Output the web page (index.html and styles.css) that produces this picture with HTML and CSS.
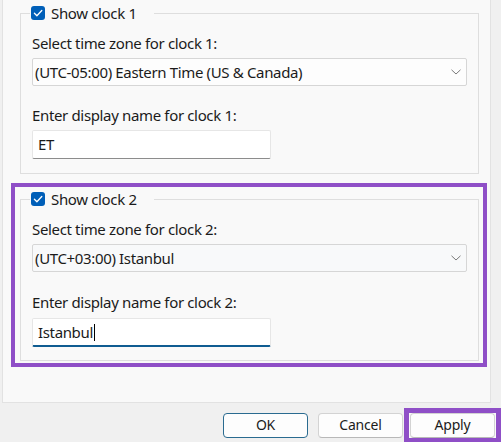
FILE: index.html
```html
<!DOCTYPE html>
<html lang="en">
<head>
<meta charset="utf-8">
<title>Additional Clocks</title>
<link rel="stylesheet" href="styles.css">
</head>
<body>
  <div class="panel">
    <fieldset class="group">
      <legend class="legend">
        <span class="check"><svg viewBox="0 0 14 14" width="14" height="14"><path d="M3.4 7.3 L5.9 9.8 L10.8 4.5" fill="none" stroke="#fff" stroke-width="1.3" stroke-linecap="round" stroke-linejoin="round"/></svg></span>
        <span class="legend-text">Show clock 1</span>
      </legend>
      <div class="field-label">Select time zone for clock 1:</div>
      <div class="select">
        <span class="select-text">(UTC-05:00) Eastern Time (US &amp; Canada)</span>
        <svg class="chev" viewBox="0 0 10 6" width="10" height="6"><path d="M0.5 0.8 L5 5 L9.5 0.8" fill="none" stroke="#7a7a7a" stroke-width="1"/></svg>
      </div>
      <div class="field-label second">Enter display name for clock 1:</div>
      <div class="textbox">ET</div>
    </fieldset>

    <div class="highlight">
      <fieldset class="group">
        <legend class="legend">
          <span class="check"><svg viewBox="0 0 14 14" width="14" height="14"><path d="M3.4 7.3 L5.9 9.8 L10.8 4.5" fill="none" stroke="#fff" stroke-width="1.3" stroke-linecap="round" stroke-linejoin="round"/></svg></span>
          <span class="legend-text">Show clock 2</span>
        </legend>
        <div class="field-label">Select time zone for clock 2:</div>
        <div class="select hover">
          <span class="select-text">(UTC+03:00) Istanbul</span>
          <svg class="chev" viewBox="0 0 10 6" width="10" height="6"><path d="M0.5 0.8 L5 5 L9.5 0.8" fill="none" stroke="#7a7a7a" stroke-width="1"/></svg>
        </div>
        <div class="field-label second">Enter display name for clock 2:</div>
        <div class="textbox focused">Istanbul<span class="caret"></span></div>
      </fieldset>
    </div>
  </div>

  <div class="footer">
    <button class="btn default">OK</button>
    <button class="btn cancel">Cancel</button>
    <div class="highlight-btn"><button class="btn">Apply</button></div>
  </div>
</body>
</html>
```

FILE: styles.css
```css
html, body {
  margin: 0;
  padding: 0;
}
body {
  background: #f0f0f0;
  font-family: "Noto Sans", "Open Sans", sans-serif;
  font-size: 15px;
  letter-spacing: -0.35px;
  color: #1b1b1b;
  width: 501px;
  height: 442px;
  overflow: hidden;
}
.panel {
  margin-left: 2px;
  width: 489px;
  height: 403px;
  box-sizing: border-box;
  background: #f9f9f9;
  border: 1px solid #e2e2e2;
  border-top: none;
  padding: 3px 0 0 8px;
  display: flex;
  flex-direction: column;
}
.group {
  margin: 0 0 0 9px;
  width: 459px;
  box-sizing: border-box;
  border: 1px solid #dedede;
  padding: 10px 10px 14px 11px;
  min-inline-size: 0;
  display: flex;
  flex-direction: column;
  align-items: flex-start;
}
.legend {
  margin-left: -2px;
  padding: 0 17px 0 1px;
  height: 20px;
  display: flex;
  align-items: center;
  gap: 6px;
  line-height: 20px;
}
.check {
  width: 14px;
  height: 14px;
  border-radius: 3px;
  background: #005fb8;
  display: flex;
}
.field-label {
  line-height: 20px;
  height: 20px;
  white-space: nowrap;
}
.field-label.second {
  margin-top: 19px;
}
.select {
  margin-top: 5px;
  width: 435px;
  height: 28px;
  box-sizing: border-box;
  border: 1px solid #d6d6d6;
  border-radius: 2px;
  background: #fdfdfd;
  display: flex;
  align-items: center;
  justify-content: space-between;
  padding: 0 5px 1px 2px;
  white-space: nowrap;
}
.select.hover {
  background: #f8f9fa;
}
.chev {
  margin-top: 1px;
}
.textbox {
  margin-top: 5px;
  width: 239px;
  height: 29px;
  box-sizing: border-box;
  background: #ffffff;
  border: 1px solid #e6e6e6;
  border-bottom: 1px solid #8c8c8c;
  border-radius: 2px;
  padding: 0 5px 1px 5px;
  display: flex;
  align-items: center;
}
.textbox.focused {
  border-bottom: 2px solid #0f5c91;
  padding-bottom: 0;
}
.caret {
  width: 1px;
  height: 17px;
  background: #000;
  margin-left: 1px;
}
.highlight {
  margin-top: 9px;
  width: 476px;
  box-sizing: border-box;
  border: 4px solid #8f4fc7;
  padding: 2px 4px 2px 5px;
}
.highlight .group {
  margin-left: 0;
  padding-bottom: 13px;
}
.highlight .field-label.second {
  margin-top: 20px;
}
.highlight .textbox {
  margin-top: 6px;
}
.footer {
  display: flex;
  justify-content: flex-end;
  align-items: flex-start;
  padding-top: 5px;
}
.btn {
  font-family: "Noto Sans", "Open Sans", sans-serif;
  font-size: 14px;
  letter-spacing: -0.2px;
  color: #1b1b1b;
  width: 85px;
  height: 25px;
  box-sizing: border-box;
  background: #fdfdfd;
  border: 1px solid #d3d3d3;
  border-bottom-color: #b8b8b8;
  border-radius: 4px;
  padding: 0 0 1px;
  margin: 5px 0 0;
  line-height: 20px;
}
.btn.default {
  border: 1px solid #2a6b90;
  margin-right: 10px;
}
.btn.cancel {
  margin-right: 1px;
}
.highlight-btn {
  border: 5px solid #8f4fc7;
  width: 97px;
  height: 35px;
  box-sizing: border-box;
  display: flex;
  align-items: flex-start;
  justify-content: center;
  background: #f9f9f9;
}
.highlight-btn .btn {
  margin: 0;
}
```
